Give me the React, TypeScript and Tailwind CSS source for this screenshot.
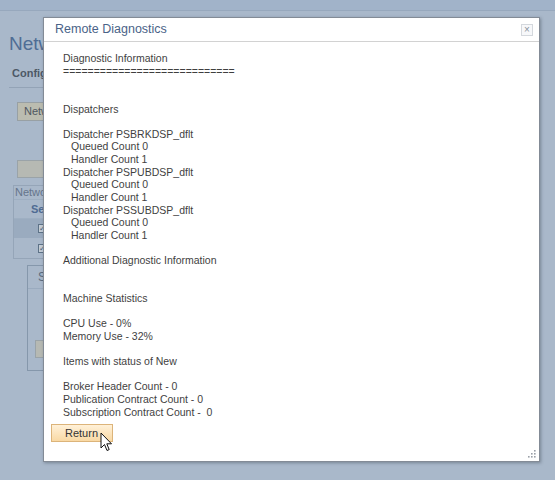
import React from "react"

const lines: { text: string; indent?: boolean }[] = [
	{ text: "Diagnostic Information" },
	{ text: "============================" },
	{ text: "" },
	{ text: "" },
	{ text: "Dispatchers" },
	{ text: "" },
	{ text: "Dispatcher PSBRKDSP_dflt" },
	{ text: "Queued Count 0", indent: true },
	{ text: "Handler Count 1", indent: true },
	{ text: "Dispatcher PSPUBDSP_dflt" },
	{ text: "Queued Count 0", indent: true },
	{ text: "Handler Count 1", indent: true },
	{ text: "Dispatcher PSSUBDSP_dflt" },
	{ text: "Queued Count 0", indent: true },
	{ text: "Handler Count 1", indent: true },
	{ text: "" },
	{ text: "Additional Diagnostic Information" },
	{ text: "" },
	{ text: "" },
	{ text: "Machine Statistics" },
	{ text: "" },
	{ text: "CPU Use - 0%" },
	{ text: "Memory Use - 32%" },
	{ text: "" },
	{ text: "Items with status of New" },
	{ text: "" },
	{ text: "Broker Header Count - 0" },
	{ text: "Publication Contract Count - 0" },
	{ text: "Subscription Contract Count -  0" },
]

const font = { fontFamily: '"Liberation Sans", Arial, sans-serif' }

const Checkbox = () => (
	<div className="h-[9px] w-[9px] border border-[#5d7287] bg-[#c3ccd6] text-[8px] leading-[7px] text-[#4a5f75]">
		✓
	</div>
)

// page behind the dialog, only its left edge shows
const Background = () => (
	<div className="flex h-full flex-col text-[11px]" style={font}>
		<div className="h-[11px] border-b border-[#97a8bd] bg-[#a1b3c9]" />
		<div className="flex w-[120px] flex-col">
			<div className="pl-[9px] pt-[22px] text-[19px] leading-[22px] text-[#4f6d95]">Netw</div>
			<div className="pl-[12px] pt-[12px] text-[11px] font-bold leading-[13px] text-[#4d5866]">Config</div>
			<div className="ml-[9px] mt-[7px] h-px bg-[#93a3b6]" />
			<div className="ml-[17px] mt-[14px] flex h-[19px] items-center border border-[#98a0a4] bg-[#bbbcb0] pl-[6px] text-[#4f5760]">
				Netw
			</div>
			<div className="ml-[17px] mt-[39px] h-[18px] border border-[#9aa3a8] bg-[#b6b9b3]" />
			<div className="ml-[13px] mt-[7px] flex h-[74px] flex-col border border-[#95a5b8]">
				<div className="pl-[1px] text-[11px] leading-[13px] text-[#65758a]">Netwo</div>
				<div className="flex h-[20px] items-center border-b border-t border-[#9eafc2] pl-[17px] font-bold text-[#4f6b93]">
					Sel
				</div>
				<div className="flex h-[20px] items-center bg-[#9aabbf] pl-[24px]">
					<Checkbox />
				</div>
				<div className="flex h-[20px] items-center pl-[24px]">
					<Checkbox />
				</div>
			</div>
			<div className="ml-[27px] mt-[6px] flex h-[106px] flex-col border border-[#8597ab]">
				<div className="flex h-[23px] items-center border-b border-[#9aabbf] pl-[10px] text-[12px] text-[#5a6a7d]">
					S
				</div>
				<div className="ml-[7px] mt-[51px] h-[18px] border border-[#9aa3a8] bg-[#b6b9b3]" />
			</div>
		</div>
	</div>
)

const Cursor = () => (
	<svg className="absolute left-[100px] top-[432px]" width="13" height="21" viewBox="0 0 13 21">
		<path
			d="M1 1 L1 16 L4.5 12.5 L7 18.5 L9.2 17.6 L6.8 11.8 L11.5 11.8 Z"
			fill="#fff"
			stroke="#111"
			strokeWidth="1"
			strokeLinejoin="round"
		/>
	</svg>
)

const Modal = () => (
	<div
		className="absolute left-[43px] top-[17px] flex h-[445px] w-[497px] flex-col border border-[#838b96] bg-white shadow-[1px_1px_3px_rgba(60,70,85,0.45)]"
		style={font}
	>
		<div className="flex h-[24px] shrink-0 items-center justify-between border-b border-[#d2d2d2] pl-[11px] pr-[6px]">
			<span className="text-[12.5px] leading-none text-[#4a6388]">Remote Diagnostics</span>
			<button className="flex h-[12px] w-[12px] items-center justify-center border border-[#d4d8dd] bg-[#f7f8fa] text-[10px] leading-none text-[#8a929c]">
				×
			</button>
		</div>
		<div className="flex flex-col px-[7px] pt-[10px]">
			<div className="pl-[12px] text-[10.5px] leading-[12.64px] text-[#3f3f3f]">
				{lines.map((l, i) => (
					<div key={i} className={l.indent ? "h-[12.64px] whitespace-pre pl-[8px]" : "h-[12.64px] whitespace-pre"}>
						{l.text}
					</div>
				))}
			</div>
			<button className="mt-[6px] h-[18px] w-[62px] border border-[#dcb47a] bg-gradient-to-b from-[#fff1d8] to-[#f9d9a4] pl-[1px] text-left text-[11px] text-[#333]">
				<span className="pl-[12px]">Return</span>
			</button>
		</div>
		<div className="mt-auto flex justify-end pb-[2px] pr-[2px]">
			<svg width="10" height="10" viewBox="0 0 10 10">
				<rect x="7" y="1" width="1.6" height="1.6" fill="#9aa0a8" />
				<rect x="4" y="4" width="1.6" height="1.6" fill="#9aa0a8" />
				<rect x="7" y="4" width="1.6" height="1.6" fill="#9aa0a8" />
				<rect x="1" y="7" width="1.6" height="1.6" fill="#9aa0a8" />
				<rect x="4" y="7" width="1.6" height="1.6" fill="#9aa0a8" />
				<rect x="7" y="7" width="1.6" height="1.6" fill="#9aa0a8" />
			</svg>
		</div>
	</div>
)

export default function App() {
	return (
		<div className="relative h-[480px] w-[555px] overflow-hidden bg-[#a9b8ca]">
			<Background />
			<Modal />
			<Cursor />
		</div>
	)
}
